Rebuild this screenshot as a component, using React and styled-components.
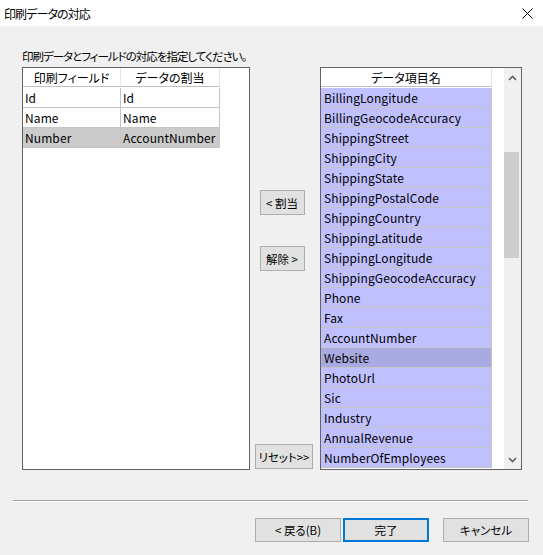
import React from 'react';
import styled, { createGlobalStyle } from 'styled-components';

const GlobalStyle = createGlobalStyle`
  html, body {
    margin: 0;
    padding: 0;
    background: #f0f0f0;
  }
  body {
    font-family: "Noto Sans CJK JP", "Noto Sans", sans-serif;
    font-size: 12px;
    color: #000;
  }
`;

const Window = styled.div`
  width: 543px;
  height: 555px;
  display: flex;
  flex-direction: column;
  background: #f0f0f0;
  overflow: hidden;
`;

const TitleBar = styled.div`
  height: 26px;
  flex: none;
  background: #fff;
  display: flex;
  align-items: center;
  justify-content: space-between;
  padding: 0 10px 0 4px;
  font-size: 12px;
  letter-spacing: -0.9px;
  font-feature-settings: 'palt';
`;

const Body = styled.div`
  flex: none;
  padding: 22px 0 0 22px;
  display: flex;
  flex-direction: column;
`;

const Instruction = styled.div`
  font-size: 11.5px;
  line-height: 16px;
  height: 16px;
  letter-spacing: -1px;
  font-feature-settings: 'palt';
  margin-bottom: 3px;
`;

const Columns = styled.div`
  display: flex;
  align-items: stretch;
  height: 403px;
`;

const ListBox = styled.div`
  width: ${(p) => p.$width}px;
  border: 1px solid #646464;
  background: #fff;
  box-sizing: border-box;
  display: flex;
  position: relative;
`;

const ListInner = styled.div`
  flex: 1;
  display: flex;
  flex-direction: column;
`;

const Row = styled.div`
  display: flex;
  height: 20px;
  flex: none;
`;

const HeaderCell = styled.div`
  width: ${(p) => p.$w}px;
  height: 19px;
  box-sizing: border-box;
  border-right: 1px solid #e5e5e5;
  border-bottom: 1px solid #c0c0c0;
  display: flex;
  align-items: center;
  justify-content: center;
  font-size: 12px;
  font-feature-settings: 'palt';
  background: #fff;
`;

const Cell = styled.div`
  width: ${(p) => p.$w}px;
  height: 20px;
  box-sizing: border-box;
  border-right: 1px solid #c4c4c4;
  border-bottom: 1px solid #c4c4c4;
  background: ${(p) => p.$bg};
  display: flex;
  align-items: center;
  padding-left: ${(p) => p.$pad}px;
  font-size: 12px;
  letter-spacing: 0.1px;
  white-space: nowrap;
  overflow: hidden;
`;

const Middle = styled.div`
  width: 70px;
  display: flex;
  flex-direction: column;
  align-items: center;
  padding-top: 123px;
`;

const SmallButton = styled.button`
  width: ${(p) => p.$w}px;
  height: 25px;
  margin-left: ${(p) => p.$ml || 0}px;
  margin-bottom: ${(p) => p.$mb || 0}px;
  margin-top: ${(p) => (p.$push ? 'auto' : '0')};
  background: #e1e1e1;
  border: 1px solid #adadad;
  font-family: "Noto Sans CJK JP", sans-serif;
  font-size: 11.5px;
  font-feature-settings: 'palt';
  padding: 0;
  color: #000;
`;

const Scrollbar = styled.div`
  width: 17px;
  margin-left: 12px;
  background: #f0f0f0;
  display: flex;
  flex-direction: column;
  align-items: center;
  position: relative;
`;

const Arrow = styled.div`
  height: 19px;
  width: 17px;
  display: flex;
  align-items: center;
  justify-content: center;
`;

const Thumb = styled.div`
  position: absolute;
  left: 0;
  width: 15px;
  top: 84px;
  height: 106px;
  background: #cdcdcd;
`;

const Separator = styled.div`
  margin: 30px 15px 0 13px;
  height: 1px;
  background: #a0a0a0;
  border-bottom: 1px solid #fff;
`;

const Footer = styled.div`
  display: flex;
  padding: 16px 0 0 255px;
  height: 24px;
`;

const DialogButton = styled.button`
  width: 86px;
  height: 24px;
  box-sizing: border-box;
  margin-right: ${(p) => p.$mr}px;
  background: #e1e1e1;
  border: ${(p) => (p.$default ? '2px solid #0078d7' : '1px solid #adadad')};
  font-family: "Noto Sans CJK JP", sans-serif;
  font-size: 11.5px;
  font-feature-settings: 'palt';
  padding: 0;
  color: #000;
`;

const mappings = [
  ['Id', 'Id', false],
  ['Name', 'Name', false],
  ['Number', 'AccountNumber', true],
];

const items = [
  'BillingLongitude',
  'BillingGeocodeAccuracy',
  'ShippingStreet',
  'ShippingCity',
  'ShippingState',
  'ShippingPostalCode',
  'ShippingCountry',
  'ShippingLatitude',
  'ShippingLongitude',
  'ShippingGeocodeAccuracy',
  'Phone',
  'Fax',
  'AccountNumber',
  'Website',
  'PhotoUrl',
  'Sic',
  'Industry',
  'AnnualRevenue',
  'NumberOfEmployees',
];

const Chevron = ({ up }) => (
  <svg width="9" height="6" viewBox="0 0 9 6">
    <path
      d={up ? 'M1 5 L4.5 1.5 L8 5' : 'M1 1 L4.5 4.5 L8 1'}
      fill="none"
      stroke="#606060"
      strokeWidth="1.6"
    />
  </svg>
);

export default function App() {
  return (
    <Window>
      <GlobalStyle />
      <TitleBar>
        <span>印刷データの対応</span>
        <svg width="11" height="11" viewBox="0 0 11 11">
          <path d="M0.5 0.5 L10.5 10.5 M10.5 0.5 L0.5 10.5" stroke="#000" strokeWidth="1" />
        </svg>
      </TitleBar>
      <Body>
        <Instruction>印刷データとフィールドの対応を指定してください。</Instruction>
        <Columns>
          <ListBox $width={228}>
            <ListInner>
              <Row>
                <HeaderCell $w={98}>印刷フィールド</HeaderCell>
                <HeaderCell $w={99}>データの割当</HeaderCell>
              </Row>
              {mappings.map(([field, data, sel]) => (
                <Row key={field}>
                  <Cell $w={98} $pad={2} $bg={sel ? '#cbcbcb' : '#fff'}>{field}</Cell>
                  <Cell $w={99} $pad={2} $bg={sel ? '#cbcbcb' : '#fff'}>{data}</Cell>
                </Row>
              ))}
            </ListInner>
          </ListBox>
          <Middle>
            <SmallButton $w={45} $ml={-6} $mb={31}>&lt; 割当</SmallButton>
            <SmallButton $w={45} $ml={-6}>解除 &gt;</SmallButton>
            <SmallButton $w={58} $ml={-2} $push $mb={1}>リセット&gt;&gt;</SmallButton>
          </Middle>
          <ListBox $width={202}>
            <ListInner>
              <Row>
                <HeaderCell $w={171}>データ項目名</HeaderCell>
              </Row>
              {items.map((it) => (
                <Row key={it}>
                  <Cell $w={171} $pad={3} $bg={it === 'Website' ? '#aaaae2' : '#c0c0ff'}>
                    {it}
                  </Cell>
                </Row>
              ))}
            </ListInner>
            <Scrollbar>
              <Arrow><Chevron up /></Arrow>
              <Thumb />
              <div style={{ flex: 1 }} />
              <Arrow><Chevron /></Arrow>
            </Scrollbar>
          </ListBox>
        </Columns>
      </Body>
      <Separator />
      <Footer>
        <DialogButton $mr={2}>&lt; 戻る(B)</DialogButton>
        <DialogButton $mr={14} $default>完了</DialogButton>
        <DialogButton $mr={0}>キャンセル</DialogButton>
      </Footer>
    </Window>
  );
}
